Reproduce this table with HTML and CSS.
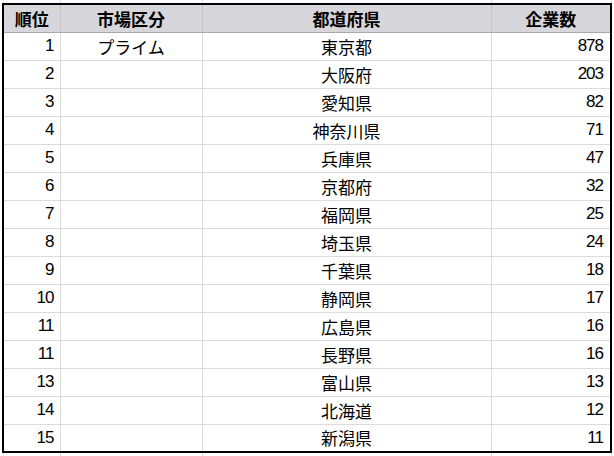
FILE: index.html
```html
<!DOCTYPE html>
<html lang="ja">
<head>
<meta charset="utf-8">
<link rel="stylesheet" href="styles.css">
</head>
<body>
<table class="sheet">
  <colgroup>
    <col class="c1"><col class="c2"><col class="c3"><col class="c4">
  </colgroup>
  <tbody class="spacer top">
    <tr><td></td><td></td><td></td><td></td></tr>
  </tbody>
  <tbody class="main">
    <tr class="head"><th>順位</th><th>市場区分</th><th>都道府県</th><th>企業数</th></tr>
    <tr><td class="num">1</td><td class="txt">プライム</td><td class="txt">東京都</td><td class="num">878</td></tr>
    <tr><td class="num">2</td><td class="txt"></td><td class="txt">大阪府</td><td class="num">203</td></tr>
    <tr><td class="num">3</td><td class="txt"></td><td class="txt">愛知県</td><td class="num">82</td></tr>
    <tr><td class="num">4</td><td class="txt"></td><td class="txt">神奈川県</td><td class="num">71</td></tr>
    <tr><td class="num">5</td><td class="txt"></td><td class="txt">兵庫県</td><td class="num">47</td></tr>
    <tr><td class="num">6</td><td class="txt"></td><td class="txt">京都府</td><td class="num">32</td></tr>
    <tr><td class="num">7</td><td class="txt"></td><td class="txt">福岡県</td><td class="num">25</td></tr>
    <tr><td class="num">8</td><td class="txt"></td><td class="txt">埼玉県</td><td class="num">24</td></tr>
    <tr><td class="num">9</td><td class="txt"></td><td class="txt">千葉県</td><td class="num">18</td></tr>
    <tr><td class="num">10</td><td class="txt"></td><td class="txt">静岡県</td><td class="num">17</td></tr>
    <tr><td class="num">11</td><td class="txt"></td><td class="txt">広島県</td><td class="num">16</td></tr>
    <tr><td class="num">11</td><td class="txt"></td><td class="txt">長野県</td><td class="num">16</td></tr>
    <tr><td class="num">13</td><td class="txt"></td><td class="txt">富山県</td><td class="num">13</td></tr>
    <tr><td class="num">14</td><td class="txt"></td><td class="txt">北海道</td><td class="num">12</td></tr>
    <tr><td class="num">15</td><td class="txt"></td><td class="txt">新潟県</td><td class="num">11</td></tr>
  </tbody>
  <tbody class="spacer bottom">
    <tr><td></td><td></td><td></td><td></td></tr>
  </tbody>
</table>
</body>
</html>
```

FILE: styles.css
```css
html, body {
  margin: 0;
  padding: 0;
  background: #ffffff;
}

.sheet {
  border-collapse: collapse;
  table-layout: fixed;
  margin-left: 2px;
  width: 610px;
  font-family: "Liberation Sans", "Noto Sans CJK JP", sans-serif;
  color: #000;
}

.c1 { width: 57px; }
.c2 { width: 142px; }
.c3 { width: 289px; }
.c4 { width: 120px; }

.sheet td, .sheet th {
  border: 1px solid #dcdcdc;
  padding: 0;
  height: 28px;
  box-sizing: border-box;
}

.spacer td {
  border-top: none;
  border-bottom: none;
}

.spacer.top td { height: 4px; }
.spacer.bottom td { height: 4px; }

.main {
  border: 2px solid #000;
}

.head th {
  background: #d7d7db;
  font-family: "Noto Sans CJK JP", sans-serif;
  font-weight: bold;
  font-size: 17px;
  text-align: center;
  border-left-color: #c4c4c8;
  border-right-color: #c4c4c8;
  border-bottom: 1px solid #a9a9ad;
  line-height: 1;
}

.num {
  text-align: right;
  font-size: 17px;
  letter-spacing: -1px;
  padding-right: 6px !important;
}

.main td:last-child.num {
  padding-right: 7px !important;
}

.txt {
  text-align: center;
  font-family: "Noto Sans CJK JP", sans-serif;
  font-size: 17px;
  line-height: 1;
}
```
